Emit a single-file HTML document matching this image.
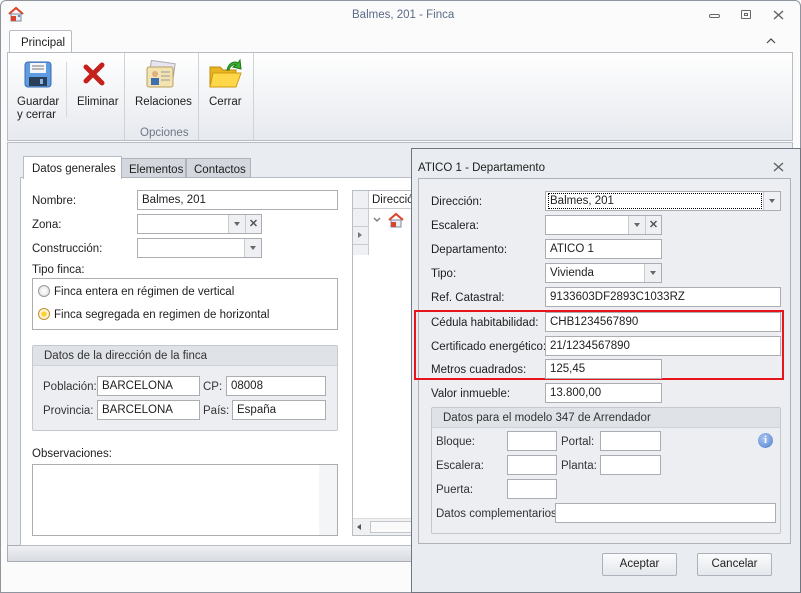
<!DOCTYPE html>
<html><head><meta charset="utf-8"><style>
*{box-sizing:border-box;margin:0;padding:0}
body{width:801px;height:593px;overflow:hidden;background:#fff;font-family:"Liberation Sans",sans-serif;font-size:11.5px;color:#1e1e1e;position:relative}
.a{position:absolute}
.in{position:absolute;background:#fff;border:1px solid #abadb3;height:20px;padding:3px 0 0 4px;white-space:nowrap;font-size:11.5px}
.lb{position:absolute;white-space:nowrap;margin-top:1px}
.dd{position:absolute;top:0;right:0;width:17px;height:18px;border-left:1px solid #c8cbd0;background:#eef0f3}
.dd:after{content:"";position:absolute;left:5px;top:7px;border-left:3px solid transparent;border-right:3px solid transparent;border-top:4px solid #666}
.xb{position:absolute;top:0;width:16px;height:18px;border-left:1px solid #c8cbd0;background:#eef0f3;font-weight:bold;color:#555;text-align:center;line-height:18px;font-size:11px}
.grp{position:absolute;border:1px solid #c5c8ce;background:#eceef2;border-radius:2px}
.gh{height:20px;background:#dfe2e7;border-bottom:1px solid #d0d3d8;padding:4px 0 0 11px;color:#333}
.btn{position:absolute;border:1px solid #aeb1b7;border-radius:2px;background:linear-gradient(#fafbfc,#e5e8ec);text-align:center;line-height:21px}
</style></head><body>
<div class="a" style="left:0;top:0;width:801px;height:593px;border:1px solid #8e959e;border-radius:6px 6px 0 0;background:#fbfbfc"></div>
<svg class="a" style="left:8px;top:6px" width="16" height="16" viewBox="0 0 16 16"><path d="M1 8 L8 2 L15 8" fill="none" stroke="#d9442a" stroke-width="2"/><rect x="3" y="8" width="10" height="7" fill="#e9eef5" stroke="#7d8a9c"/><rect x="3" y="10" width="5" height="5" fill="#d9442a"/><rect x="10" y="9" width="2" height="2" fill="#5a87c8"/></svg>
<div class="lb" style="left:352px;top:8px;color:#5b6a85">Balmes, 201 - Finca</div>
<div class="a" style="left:709px;top:14px;width:11px;height:4px;border:1px solid #666;border-radius:2px"></div>
<div class="a" style="left:741px;top:10px;width:10px;height:9px;border:1px solid #666;border-radius:1px"><div style="margin:2px;height:3px;border:1px solid #666"></div></div>
<svg class="a" style="left:773px;top:10px" width="11" height="10" viewBox="0 0 11 10"><path d="M1 1 L10 9 M10 1 L1 9" stroke="#666" stroke-width="1.5"/></svg>
<svg class="a" style="left:766px;top:37px" width="10" height="7" viewBox="0 0 10 7"><path d="M1 6 L5 2 L9 6" fill="none" stroke="#444" stroke-width="1.2"/></svg>
<div class="a" style="left:9px;top:30px;width:63px;height:23px;border:1px solid #b8bcc3;border-bottom:none;background:#fff;border-radius:2px 2px 0 0;padding:6px 0 0 11px">Principal</div>
<div class="a" style="left:7px;top:52px;width:786px;height:89px;border:1px solid #b8bcc3;background:linear-gradient(#fff,#e6e9ee)"></div>
<div class="a" style="left:124px;top:53px;width:1px;height:87px;background:#cfd2d7"></div>
<div class="a" style="left:198px;top:53px;width:1px;height:87px;background:#cfd2d7"></div>
<div class="a" style="left:253px;top:53px;width:1px;height:87px;background:#cfd2d7"></div>
<div class="a" style="left:66px;top:62px;width:1px;height:55px;background:#d5d8dc"></div>
<svg class="a" style="left:24px;top:61px" width="28" height="27" viewBox="0 0 28 27"><rect x="1" y="1" width="26" height="25" rx="3" fill="#5e9be0" stroke="#3a6bb0"/><rect x="6" y="2" width="16" height="10" fill="#f4f6f8"/><line x1="8" y1="5" x2="20" y2="5" stroke="#777"/><line x1="8" y1="8" x2="20" y2="8" stroke="#777"/><rect x="5" y="16" width="18" height="9" fill="#2a3f5a"/><rect x="16" y="18" width="3" height="5" fill="#8fb4e0"/></svg>
<div class="lb" style="left:17px;top:95px;line-height:13px">Guardar<br>y cerrar</div>
<svg class="a" style="left:83px;top:62px" width="24" height="24" viewBox="0 0 24 24"><path d="M3 5 L19 21 M19 3 L3 19" stroke="#c5201c" stroke-width="5" stroke-linecap="round"/></svg>
<div class="lb" style="left:77px;top:95px">Eliminar</div>
<svg class="a" style="left:144px;top:59px" width="32" height="32" viewBox="0 0 32 32"><rect x="6" y="3" width="24" height="18" fill="#e8e4f0" stroke="#aaa" transform="rotate(8 18 12)"/><rect x="3" y="8" width="26" height="20" rx="2" fill="#f3e3b0" stroke="#b9a060"/><circle cx="11" cy="15" r="3" fill="#e0b080"/><rect x="7" y="19" width="8" height="7" fill="#3b6fb0"/><line x1="17" y1="13" x2="26" y2="13" stroke="#999"/><line x1="17" y1="17" x2="26" y2="17" stroke="#999"/><line x1="17" y1="21" x2="26" y2="21" stroke="#999"/></svg>
<div class="lb" style="left:135px;top:95px">Relaciones</div>
<div class="lb" style="left:140px;top:126px;color:#6e7787">Opciones</div>
<svg class="a" style="left:209px;top:58px" width="34" height="32" viewBox="0 0 34 32"><path d="M1 9 h10 l3 3 h13 v17 h-26z" fill="#e8b520" stroke="#c08a10"/><path d="M4 15 h28 l-5 14 h-26z" fill="#ffd84a" stroke="#d09a10"/><path d="M18 12 C20 4 26 3 29 5 L31 2 L32 11 L24 9 L27 7 C24 6 21 8 20 12z" fill="#3bb030" stroke="#1d7a18"/></svg>
<div class="lb" style="left:209px;top:95px">Cerrar</div>
<div class="a" style="left:7px;top:142px;width:786px;height:420px;background:#e9ecf0;border:1px solid #b8bcc3"></div>
<div class="a" style="left:7px;top:545px;width:786px;height:17px;background:linear-gradient(#eef0f3,#d8dce2);border:1px solid #a9adb4"></div>
<div class="a" style="left:20px;top:177px;width:400px;height:369px;background:#fff;border:1px solid #b8bcc3"></div>
<div class="a" style="left:23px;top:156px;width:99px;height:23px;background:#fff;border:1px solid #b8bcc3;border-bottom:none;padding:6px 0 0 8px">Datos generales</div>
<div class="a" style="left:121px;top:158px;width:65px;height:20px;background:#d4d8de;border:1px solid #aeb2b9;padding:5px 0 0 7px">Elementos</div>
<div class="a" style="left:186px;top:158px;width:65px;height:20px;background:#d4d8de;border:1px solid #aeb2b9;padding:5px 0 0 7px">Contactos</div>
<div class="lb" style="left:32px;top:194px">Nombre:</div>
<div class="in" style="left:137px;top:190px;width:201px">Balmes, 201</div>
<div class="lb" style="left:32px;top:218px">Zona:</div>
<div class="in" style="left:137px;top:214px;width:125px"><div class="dd" style="right:16px"></div><div class="xb" style="right:0">✕</div></div>
<div class="lb" style="left:32px;top:242px">Construcción:</div>
<div class="in" style="left:137px;top:238px;width:125px"><div class="dd"></div></div>
<div class="lb" style="left:32px;top:263px">Tipo finca:</div>
<div class="a" style="left:32px;top:278px;width:306px;height:52px;border:1px solid #abadb3"></div>
<div class="a" style="left:38px;top:285px;width:12px;height:12px;border-radius:50%;border:1px solid #999;background:radial-gradient(#fff,#ddd)"></div>
<div class="lb" style="left:54px;top:285px">Finca entera en régimen de vertical</div>
<div class="a" style="left:38px;top:308px;width:12px;height:12px;border-radius:50%;border:1px solid #c09030;background:radial-gradient(#ffd030 30%,#fff5d0 45%,#eee)"></div>
<div class="lb" style="left:54px;top:308px">Finca segregada en regimen de horizontal</div>
<div class="grp" style="left:32px;top:345px;width:306px;height:86px"><div class="gh">Datos de la dirección de la finca</div></div>
<div class="lb" style="left:43px;top:380px;color:#333">Población:</div>
<div class="in" style="left:97px;top:376px;width:103px">BARCELONA</div>
<div class="lb" style="left:203px;top:380px;color:#333">CP:</div>
<div class="in" style="left:226px;top:376px;width:100px">08008</div>
<div class="lb" style="left:43px;top:404px;color:#333">Provincia:</div>
<div class="in" style="left:97px;top:400px;width:103px">BARCELONA</div>
<div class="lb" style="left:203px;top:404px;color:#333">País:</div>
<div class="in" style="left:232px;top:400px;width:94px">España</div>
<div class="lb" style="left:32px;top:447px">Observaciones:</div>
<div class="a" style="left:32px;top:464px;width:306px;height:72px;border:1px solid #abadb3"><div class="a" style="right:0;top:0;width:18px;height:70px;background:#f4f5f6"></div></div>
<div class="a" style="left:352px;top:190px;width:70px;height:346px;border:1px solid #b8bcc3;background:#fff"></div>
<div class="a" style="left:353px;top:191px;width:16px;height:64px;background:#eef0f3;border-right:1px solid #c8cbd0"></div>
<div class="a" style="left:353px;top:208px;width:68px;height:1px;background:#c8cbd0"></div>
<div class="a" style="left:353px;top:226px;width:16px;height:1px;background:#c8cbd0"></div>
<div class="a" style="left:353px;top:244px;width:16px;height:1px;background:#c8cbd0"></div>
<div class="lb" style="left:372px;top:193px">Direcció</div>
<svg class="a" style="left:373px;top:217px" width="8" height="6" viewBox="0 0 8 6"><path d="M1 1 L4 4 L7 1" fill="none" stroke="#777" stroke-width="1.3"/></svg>
<div class="a" style="left:358px;top:232px;border-top:3px solid transparent;border-bottom:3px solid transparent;border-left:4px solid #777"></div>
<svg class="a" style="left:388px;top:212px" width="16" height="16" viewBox="0 0 16 16"><path d="M1 8 L8 2 L15 8" fill="none" stroke="#d9442a" stroke-width="2"/><rect x="3" y="8" width="10" height="7" fill="#e9eef5" stroke="#7d8a9c"/><rect x="3" y="10" width="5" height="5" fill="#d9442a"/></svg>
<div class="a" style="left:353px;top:518px;width:68px;height:17px;background:#f0f1f3;border-top:1px solid #ddd"><div class="a" style="left:4px;top:5px;border-top:3px solid transparent;border-bottom:3px solid transparent;border-right:4px solid #555"></div><div class="a" style="left:17px;top:2px;width:60px;height:12px;border:1px solid #c3c6cb;background:#fafafa"></div></div>
<div class="a" style="left:411px;top:148px;width:390px;height:445px;background:#e9ecf0;border:1px solid #6f7680"></div>
<div class="lb" style="left:418px;top:161px">ATICO 1 - Departamento</div>
<svg class="a" style="left:773px;top:162px" width="11" height="10" viewBox="0 0 11 10"><path d="M1 1 L10 9 M10 1 L1 9" stroke="#666" stroke-width="1.5"/></svg>
<div class="a" style="left:418px;top:178px;width:373px;height:366px;border:1px solid #aeb2b9;background:#eceef2"></div>
<div class="lb" style="left:431px;top:195px">Dirección:</div>
<div class="in" style="left:545px;top:191px;width:236px"><span style="outline:1px dotted #000;outline-offset:1px;display:inline-block;width:210px">Balmes, 201</span><div class="dd"></div></div>
<div class="lb" style="left:431px;top:219px">Escalera:</div>
<div class="in" style="left:545px;top:215px;width:117px"><div class="dd" style="right:16px"></div><div class="xb" style="right:0">✕</div></div>
<div class="lb" style="left:431px;top:243px">Departamento:</div>
<div class="in" style="left:545px;top:239px;width:117px">ATICO 1</div>
<div class="lb" style="left:431px;top:267px">Tipo:</div>
<div class="in" style="left:545px;top:263px;width:117px">Vivienda<div class="dd"></div></div>
<div class="lb" style="left:431px;top:291px">Ref. Catastral:</div>
<div class="in" style="left:545px;top:287px;width:236px">9133603DF2893C1033RZ</div>
<div class="a" style="left:414px;top:310px;width:370px;height:70px;border:2px solid #e8141b"></div>
<div class="lb" style="left:431px;top:316px">Cédula habitabilidad:</div>
<div class="in" style="left:545px;top:312px;width:236px">CHB1234567890</div>
<div class="lb" style="left:431px;top:340px">Certificado energético:</div>
<div class="in" style="left:545px;top:336px;width:236px">21/1234567890</div>
<div class="lb" style="left:431px;top:363px">Metros cuadrados:</div>
<div class="in" style="left:545px;top:359px;width:117px">125,45</div>
<div class="lb" style="left:431px;top:387px">Valor inmueble:</div>
<div class="in" style="left:545px;top:383px;width:117px">13.800,00</div>
<div class="grp" style="left:431px;top:407px;width:350px;height:127px"><div class="gh">Datos para el modelo 347 de Arrendador</div></div>
<div class="lb" style="left:436px;top:435px;color:#333">Bloque:</div>
<div class="in" style="left:507px;top:431px;width:50px"></div>
<div class="lb" style="left:561px;top:435px;color:#333">Portal:</div>
<div class="in" style="left:600px;top:431px;width:61px"></div>
<div class="a" style="left:758px;top:433px;width:15px;height:15px;border-radius:50%;background:radial-gradient(circle at 40% 35%,#a9c6f0,#4f7fcf);color:#fff;font-weight:bold;font-size:11px;text-align:center;line-height:15px;font-family:'Liberation Serif',serif">i</div>
<div class="lb" style="left:436px;top:459px;color:#333">Escalera:</div>
<div class="in" style="left:507px;top:455px;width:50px"></div>
<div class="lb" style="left:561px;top:459px;color:#333">Planta:</div>
<div class="in" style="left:600px;top:455px;width:61px"></div>
<div class="lb" style="left:436px;top:483px;color:#333">Puerta:</div>
<div class="in" style="left:507px;top:479px;width:50px"></div>
<div class="lb" style="left:436px;top:507px;color:#333">Datos complementarios:</div>
<div class="in" style="left:555px;top:503px;width:221px"></div>
<div class="btn" style="left:602px;top:553px;width:75px;height:23px">Aceptar</div>
<div class="btn" style="left:697px;top:553px;width:75px;height:23px">Cancelar</div>
</body></html>
